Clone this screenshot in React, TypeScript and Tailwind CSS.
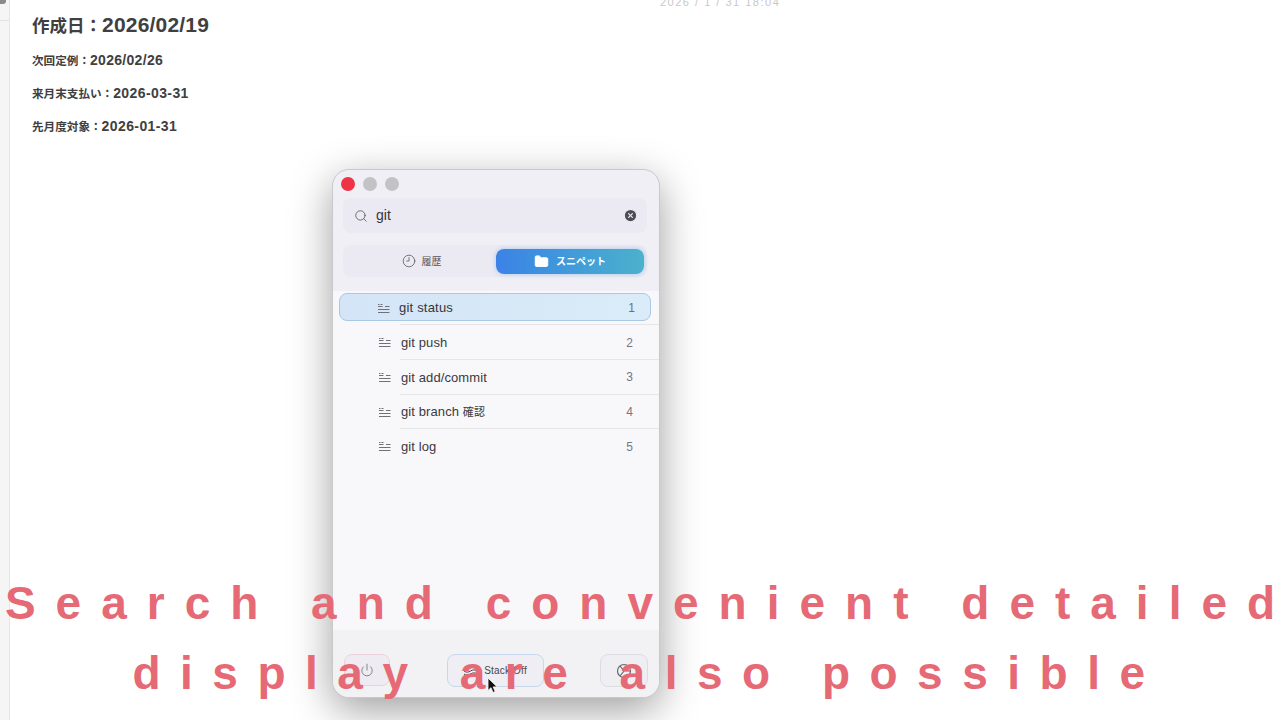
import React from 'react';
import { Search, CircleX, Clock9, Folder, Power } from 'lucide-react';

const snippets = [
  { name: 'git status', no: 1 },
  { name: 'git push', no: 2 },
  { name: 'git add/commit', no: 3 },
  { name: 'git branch ', cjk: '確認', no: 4 },
  { name: 'git log', no: 5 },
];

const jp = "font-['Liberation_Sans','Noto_Sans_CJK_JP',sans-serif]";

const SnippetIcon: React.FC = () => (
  <svg width="13" height="11" viewBox="0 0 13 11" className="shrink-0 text-[#707077]" fill="none" stroke="currentColor">
    <path d="M1 1.500h1.500M3.500 1.500h2M1 3.500h4.500M8 3.500h4.500M1 6.500h11.500M1 9.500h11.500" strokeWidth="1" />
  </svg>
);

type RowProps = { name: string; cjk?: string; no: number };

const ActiveRow: React.FC<RowProps> = ({ name, no }) => (
  <div className="relative pb-[4.300px]">
    <div className="ml-[6px] mr-[8px] flex h-[28px] items-center rounded-[8px] border border-[#a9c8e6] bg-gradient-to-r from-[#d3e5f7] to-[#daecf8] pl-[37px] pr-[15px] pt-[2px]">
      <SnippetIcon />
      <span className="ml-[9px] flex-1 text-[13px] tracking-[0.2px] text-[#33373d]">{name}</span>
      <span className="text-[12px] text-[#6b7078]">{no}</span>
    </div>
    <div className="absolute bottom-0 left-[67px] right-0 h-px bg-[#e6e6e9]" />
  </div>
);

const Row: React.FC<RowProps & { last: boolean }> = ({ name, cjk, no, last }) => (
  <div className="relative flex h-[34.700px] items-center pl-[45px] pr-[26px]">
    <SnippetIcon />
    <span className="ml-[10px] flex-1 text-[13px] tracking-[0.1px] text-[#3a3a3f]">
      {name}
      {cjk && <span className="text-[11px]">{cjk}</span>}
    </span>
    <span className="text-[12px] text-[#77777d]">{no}</span>
    {!last && <div className="absolute bottom-0 left-[67px] right-0 h-px bg-[#e6e6e9]" />}
  </div>
);

const SnippetWindow: React.FC = () => (
  <div className="absolute left-[332px] top-[169px] flex h-[529px] w-[328px] flex-col overflow-hidden rounded-[17px] border border-[#c9c9cc] bg-[#f0eff5] shadow-[0_12px_42px_rgba(0,0,0,0.38)]">
    <div className="flex h-[28px] shrink-0 items-center gap-[8px] pl-[8px]">
      <span className="h-[14px] w-[14px] rounded-full bg-[#ee3347]" />
      <span className="h-[14px] w-[14px] rounded-full bg-[#c3c3c6]" />
      <span className="h-[14px] w-[14px] rounded-full bg-[#c3c3c6]" />
    </div>
    <div className="ml-[10px] mr-[12px] flex h-[35px] shrink-0 items-center rounded-[8px] bg-[#ebeaf2] pl-[11px] pr-[9px]">
      <Search size={14} strokeWidth={1.4} className="text-[#55555c]" />
      <span className="ml-[8px] flex-1 text-[14px] text-[#35353a]">git</span>
      <CircleX size={15} fill="#4d4d53" stroke="#ebeaf2" strokeWidth={2} />
    </div>
    <div className="ml-[10px] mr-[12px] mt-[12px] flex h-[32px] shrink-0 items-center rounded-[8px] bg-[#ebeaf2] pr-[3px]">
      <div className="flex w-[153px] items-center justify-center gap-[6px] pl-[4px] text-[#55555c]">
        <Clock9 size={14} strokeWidth={1.3} />
        <span className="text-[10px]">履歴</span>
      </div>
      <div className="flex h-[25px] flex-1 items-center justify-center gap-[7px] rounded-[8px] bg-gradient-to-r from-[#3c82e6] to-[#4bb1cb] text-white shadow-[0_0_5px_rgba(80,150,235,0.45)]">
        <Folder size={15} fill="white" strokeWidth={1.5} />
        <span className="text-[10px] font-bold">スニペット</span>
      </div>
    </div>
    <div className="mt-[14px] flex flex-1 flex-col bg-[#f8f8fa] pt-[2px]">
      <ActiveRow {...snippets[0]} />
      {snippets.slice(1).map((s, i) => (
        <Row key={s.no} {...s} last={i === 3} />
      ))}
    </div>
    <div className="flex h-[67px] shrink-0 items-start justify-between bg-[#f2f2f5] px-[11px] pt-[24px]">
      <div className="flex h-[32px] w-[46px] items-center justify-center rounded-[8px] border border-[#ecd2d8] bg-[#eeecf2] text-[#66666c]">
        <Power size={14} strokeWidth={1.3} />
      </div>
      <div className="flex h-[33px] w-[97px] items-center justify-center gap-[6px] rounded-[8px] border border-[#c6d8ea] bg-[#eeeef4] text-[#45454b]">
        <svg width="15" height="10" viewBox="0 0 15 10" fill="none" stroke="currentColor">
          <path d="M1 2c2 1.500 4 1.500 6.500 0s4.500-1.500 6.500 0M1 5c2 1.500 4 1.500 6.500 0s4.500-1.500 6.500 0M1 8c2 1.500 4 1.500 6.500 0s4.500-1.500 6.500 0" />
        </svg>
        <span className="text-[10px] tracking-[0.2px]">Stack Off</span>
      </div>
      <div className="flex h-[33px] w-[48px] items-center justify-center rounded-[8px] border border-[#dcdce2] bg-[#eeeef3] text-[#66666c]">
        <svg width="16" height="16" viewBox="0 0 16 16" fill="none" stroke="currentColor" strokeWidth="1.2">
          <circle cx="8" cy="8" r="6.500" />
          <path d="M4 3l4 5-4 5M8 8h6" />
        </svg>
      </div>
    </div>
  </div>
);

const App: React.FC = () => {
  return (
    <div className={`relative h-[720px] w-[1280px] overflow-hidden bg-white ${jp}`}>
      <div className="flex h-full">
        <div className="flex w-[10px] shrink-0 flex-col border-r border-[#e6e6e6] bg-[#f5f5f5]">
          <div className="h-[4px] w-[6px] rounded-br-[3px] bg-[#8a8a8a]" />
          <div className="mt-[16px] h-px bg-[#e2e2e2]" />
        </div>
        <div className="flex-1 pl-[22px] pt-[12px] text-[#404040]">
          <h1 className="text-[17.500px] leading-[25px] font-bold">
            作成日：<span className="text-[21px] tracking-[0.2px]">2026/02/19</span>
          </h1>
          <p className="mt-[13px] text-[11.600px] leading-[17px] font-bold">
            次回定例：<span className="text-[14px] tracking-[0.3px]">2026/02/26</span>
          </p>
          <p className="mt-[16px] text-[11.600px] leading-[17px] font-bold">
            来月末支払い：<span className="text-[14px] tracking-[0.4px]">2026-03-31</span>
          </p>
          <p className="mt-[16px] text-[11.600px] leading-[17px] font-bold">
            先月度対象：<span className="text-[14px] tracking-[0.4px]">2026-01-31</span>
          </p>
        </div>
      </div>
      <div className="absolute left-[660px] top-[-6px] text-[11px] tracking-[1.5px] text-[#c8c8c8]">2026 / 1 / 31 18:04</div>
      <SnippetWindow />
      <svg className="absolute left-[487px] top-[677px]" width="12" height="17" viewBox="0 0 12 17">
        <path d="M1 1v12.500l3-2.800 2 4.800 2.200-1-2-4.600h4z" fill="#111" stroke="#fff" strokeWidth="0.800" />
      </svg>
      <div className="absolute left-[10px] right-[-10px] top-[572px] flex flex-col items-center text-[46px] leading-[62px] font-bold text-[#e56a76] font-['Liberation_Sans',sans-serif]">
        <div className="whitespace-nowrap tracking-[20px]">Search and convenient detailed</div>
        <div className="mt-[8px] whitespace-nowrap pr-[3px] tracking-[19.500px]">display are also possible</div>
      </div>
    </div>
  );
};

export default App;
